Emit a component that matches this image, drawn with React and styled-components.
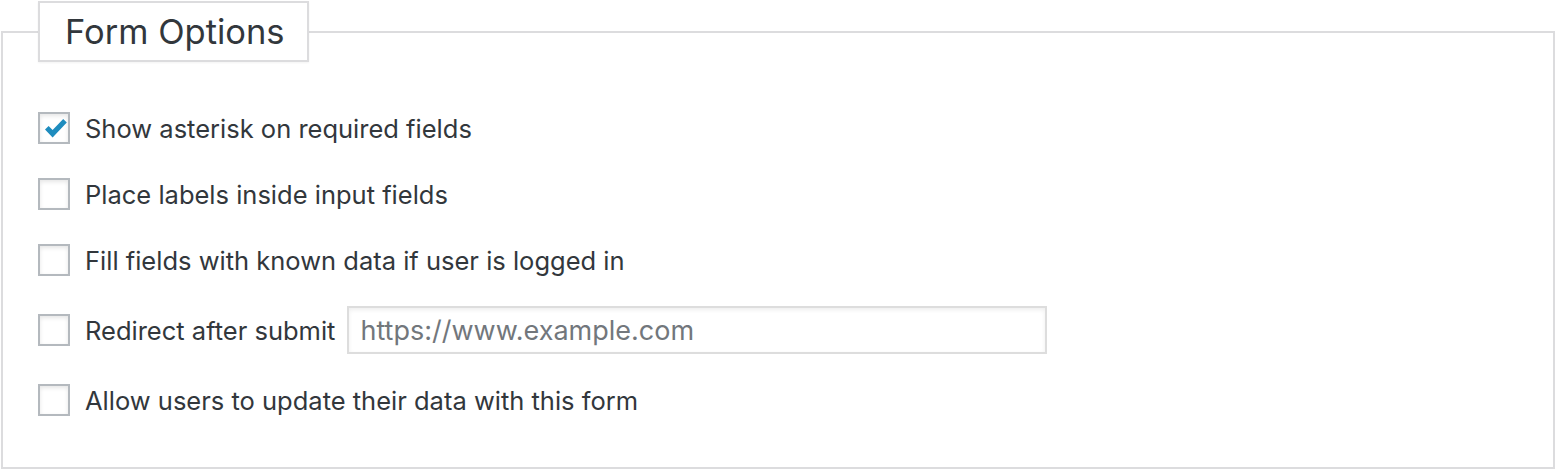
import React from 'react'
import styled, { createGlobalStyle } from 'styled-components'

const GlobalStyle = createGlobalStyle`
  html, body {
    margin: 0;
    padding: 0;
    background: #fff;
  }
  body {
    font-family: Inter, "Liberation Sans", sans-serif;
    color: #444;
  }
`

const Fieldset = styled.fieldset`
  margin: 1px;
  height: 468px;
  box-sizing: border-box;
  padding: 0 35px;
  border: 2px solid #dcdcde;
  min-inline-size: 0;
`

const Legend = styled.legend`
  box-sizing: border-box;
  width: 271px;
  height: 61px;
  padding: 0 0 0 25px;
  border: 2px solid #dcdcde;
  box-shadow: 0 1px 2px rgba(0, 0, 0, 0.05);
  font-size: 34.5px;
  line-height: 57px;
  color: #32373c;
  background: #fff;
`

const Options = styled.div`
  display: flex;
  flex-direction: column;
  gap: 26px;
  padding-top: 46px;
`

const Row = styled.label`
  display: flex;
  align-items: center;
  height: ${props => (props.tall ? '48px' : '40px')};
  font-size: 25.5px;
  color: #32373c;
  cursor: pointer;
`

const Box = styled.span`
  flex: none;
  box-sizing: border-box;
  width: 32px;
  height: 32px;
  margin-right: 15px;
  padding: 2px 0 0 3px;
  border: 2px solid #b4b9be;
  background: #fff;
  box-shadow: inset 0 2px 4px rgba(0, 0, 0, 0.1);
  display: flex;
  align-items: center;
  justify-content: center;
`

const UrlInput = styled.input`
  box-sizing: border-box;
  width: 700px;
  height: 48px;
  margin-left: 12px;
  padding: 0 11px;
  border: 2px solid #ddd;
  box-shadow: inset 0 2px 4px rgba(0, 0, 0, 0.07);
  font-family: inherit;
  font-size: 27px;
  color: #32373c;
  outline: none;
  &::placeholder {
    color: #72777c;
  }
`

const Check = () => (
  <svg width="22" height="22" viewBox="0 0 22 22">
    <path d="M0 11.5 L3.6 8 L7.6 12 L18.2 1 L21.8 4.6 L7.6 19.5 Z" fill="#1e8cbe" />
  </svg>
)

const options = [
  { id: 'asterisk', text: 'Show asterisk on required fields', checked: true },
  { id: 'labels', text: 'Place labels inside input fields' },
  { id: 'prefill', text: 'Fill fields with known data if user is logged in' },
  { id: 'redirect', text: 'Redirect after submit', url: true },
  { id: 'update', text: 'Allow users to update their data with this form' },
]

const App = () => {
  return (
    <>
      <GlobalStyle />
      <Fieldset>
        <Legend>Form Options</Legend>
        <Options>
          {options.map(opt => (
            <Row key={opt.id} tall={opt.url}>
              <Box>{opt.checked && <Check />}</Box>
              {opt.text}
              {opt.url && <UrlInput type="text" placeholder="https://www.example.com" />}
            </Row>
          ))}
        </Options>
      </Fieldset>
    </>
  )
}

export default App
